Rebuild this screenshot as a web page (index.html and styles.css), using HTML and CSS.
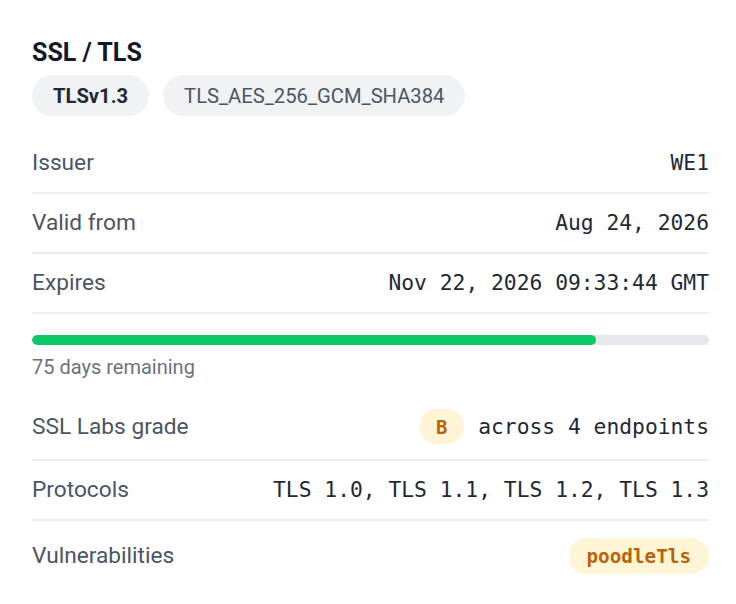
FILE: index.html
```html
<!DOCTYPE html>
<html lang="en">
<head>
<meta charset="utf-8">
<title>SSL / TLS</title>
<link rel="stylesheet" href="styles.css">
</head>
<body>
<section class="card">
  <h2 class="title">SSL / TLS</h2>
  <div class="chips">
    <span class="chip chip-strong">TLSv1.3</span>
    <span class="chip">TLS_AES_256_GCM_SHA384</span>
  </div>
  <div class="rows">
    <div class="row">
      <span class="label">Issuer</span>
      <span class="value">WE1</span>
    </div>
    <div class="row">
      <span class="label">Valid from</span>
      <span class="value">Aug 24, 2026</span>
    </div>
    <div class="row">
      <span class="label">Expires</span>
      <span class="value">Nov 22, 2026 09:33:44 GMT</span>
    </div>
    <div class="lifetime">
      <div class="track"><div class="fill" style="width: 83.3%"></div></div>
      <div class="remaining">75 days remaining</div>
    </div>
    <div class="row row-grade">
      <span class="label">SSL Labs grade</span>
      <span class="value grade-wrap"><span class="grade">B</span><span>across 4 endpoints</span></span>
    </div>
    <div class="row">
      <span class="label">Protocols</span>
      <span class="value">TLS 1.0, TLS 1.1, TLS 1.2, TLS 1.3</span>
    </div>
    <div class="row row-last">
      <span class="label">Vulnerabilities</span>
      <span class="vuln">poodleTls</span>
    </div>
  </div>
</section>
</body>
</html>
```

FILE: styles.css
```css
* { box-sizing: border-box; }

html, body {
  margin: 0;
  padding: 0;
  background: #ffffff;
}

body {
  font-family: Roboto, "Liberation Sans", Arial, sans-serif;
  color: #111827;
}

.card {
  padding: 38px 27px 0 32px;
}

.title {
  margin: 0;
  font-size: 25px;
  line-height: 30px;
  font-weight: 700;
  color: #111827;
}

.chips {
  display: flex;
  gap: 14px;
  margin-top: 7px;
  margin-bottom: 18px;
}

.chip {
  display: inline-flex;
  align-items: center;
  height: 41px;
  padding: 0 21px;
  border-radius: 999px;
  background: #f1f2f4;
  font-size: 20.2px;
  color: #4b5563;
}

.chip-strong {
  font-weight: 700;
  color: #1f2937;
}

.rows {
  display: flex;
  flex-direction: column;
}

.row {
  display: flex;
  align-items: center;
  justify-content: space-between;
  padding: 16px 0;
  border-bottom: 2px solid #eceef1;
}

.row-grade {
  padding: 16px 0 15px;
}

.row-last {
  border-bottom: none;
  padding: 17px 0;
}

.label {
  font-size: 22.7px;
  line-height: 26px;
  color: #4b5563;
}

.value {
  font-family: "DejaVu Sans Mono", "Liberation Mono", monospace;
  font-size: 21.3px;
  line-height: 26px;
  color: #1f2937;
}

.lifetime {
  padding: 21px 0 14px;
}

.track {
  height: 10px;
  border-radius: 999px;
  background: #e6e7eb;
  overflow: hidden;
}

.fill {
  height: 100%;
  border-radius: 999px;
  background: #0cc866;
}

.remaining {
  margin-top: 10px;
  font-size: 20px;
  line-height: 24px;
  color: #6b7280;
}

.grade-wrap {
  display: inline-flex;
  align-items: center;
  gap: 14px;
}

.grade {
  display: inline-flex;
  align-items: center;
  justify-content: center;
  width: 45px;
  height: 35px;
  border-radius: 999px;
  background: #fef4d6;
  color: #b8650a;
  font-weight: 700;
  font-size: 19px;
}

.vuln {
  display: inline-flex;
  align-items: center;
  height: 36px;
  padding: 0 18px;
  border-radius: 999px;
  background: #fef4d6;
  color: #b8650a;
  font-family: "DejaVu Sans Mono", "Liberation Mono", monospace;
  font-weight: 700;
  font-size: 19.3px;
}
```
